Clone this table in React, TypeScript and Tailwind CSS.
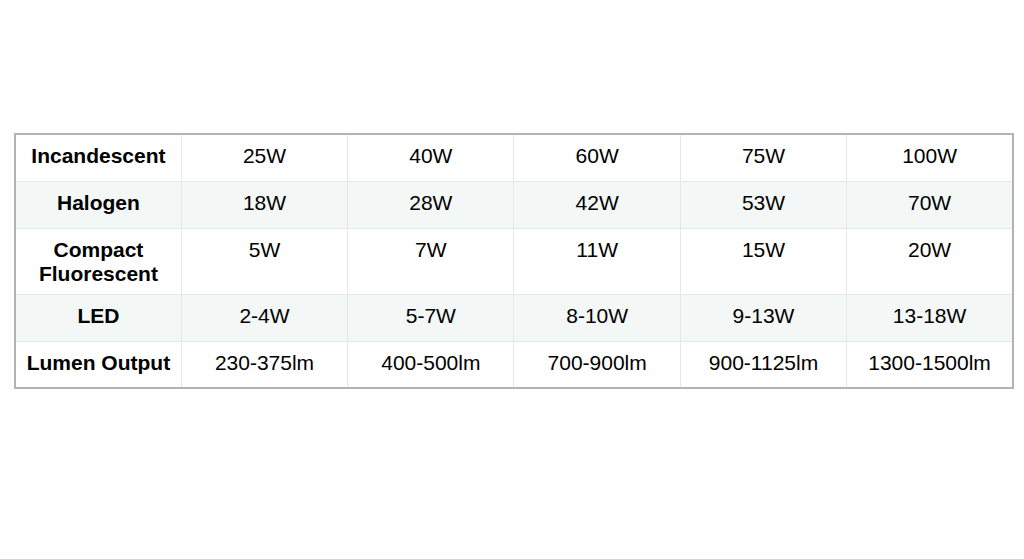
const rows: { label: string[]; values: string[]; shaded: boolean }[] = [
  { label: ["Incandescent"], values: ["25W", "40W", "60W", "75W", "100W"], shaded: false },
  { label: ["Halogen"], values: ["18W", "28W", "42W", "53W", "70W"], shaded: true },
  { label: ["Compact", "Fluorescent"], values: ["5W", "7W", "11W", "15W", "20W"], shaded: false },
  { label: ["LED"], values: ["2-4W", "5-7W", "8-10W", "9-13W", "13-18W"], shaded: true },
  {
    label: ["Lumen Output"],
    values: ["230-375lm", "400-500lm", "700-900lm", "900-1125lm", "1300-1500lm"],
    shaded: false,
  },
];

export default function App() {
  return (
    <div
      className="w-[1024px] h-[559px] bg-white pt-[133px] pl-[14px] text-black"
      style={{ fontFamily: '"Liberation Sans", Arial, sans-serif' }}
    >
      <table className="w-[1000px] table-fixed border-collapse border-2 border-[#b3b3b3]">
        <tbody>
          {rows.map((row) => (
            <tr key={row.label.join(" ")} className={row.shaded ? "bg-[#f3f7f6]" : "bg-white"}>
              <td className="h-[47px] align-top border border-[#e6e8e8] pt-[9px] pb-[7px] text-center text-[21px] leading-[24.5px] font-bold">
                {row.label.map((l) => (
                  <div key={l}>{l}</div>
                ))}
              </td>
              {row.values.map((v) => (
                <td
                  key={v}
                  className="h-[47px] align-top border border-[#e6e8e8] pt-[9px] pb-[7px] text-center text-[21px] leading-[24.5px]"
                >
                  {v}
                </td>
              ))}
            </tr>
          ))}
        </tbody>
      </table>
    </div>
  );
}
